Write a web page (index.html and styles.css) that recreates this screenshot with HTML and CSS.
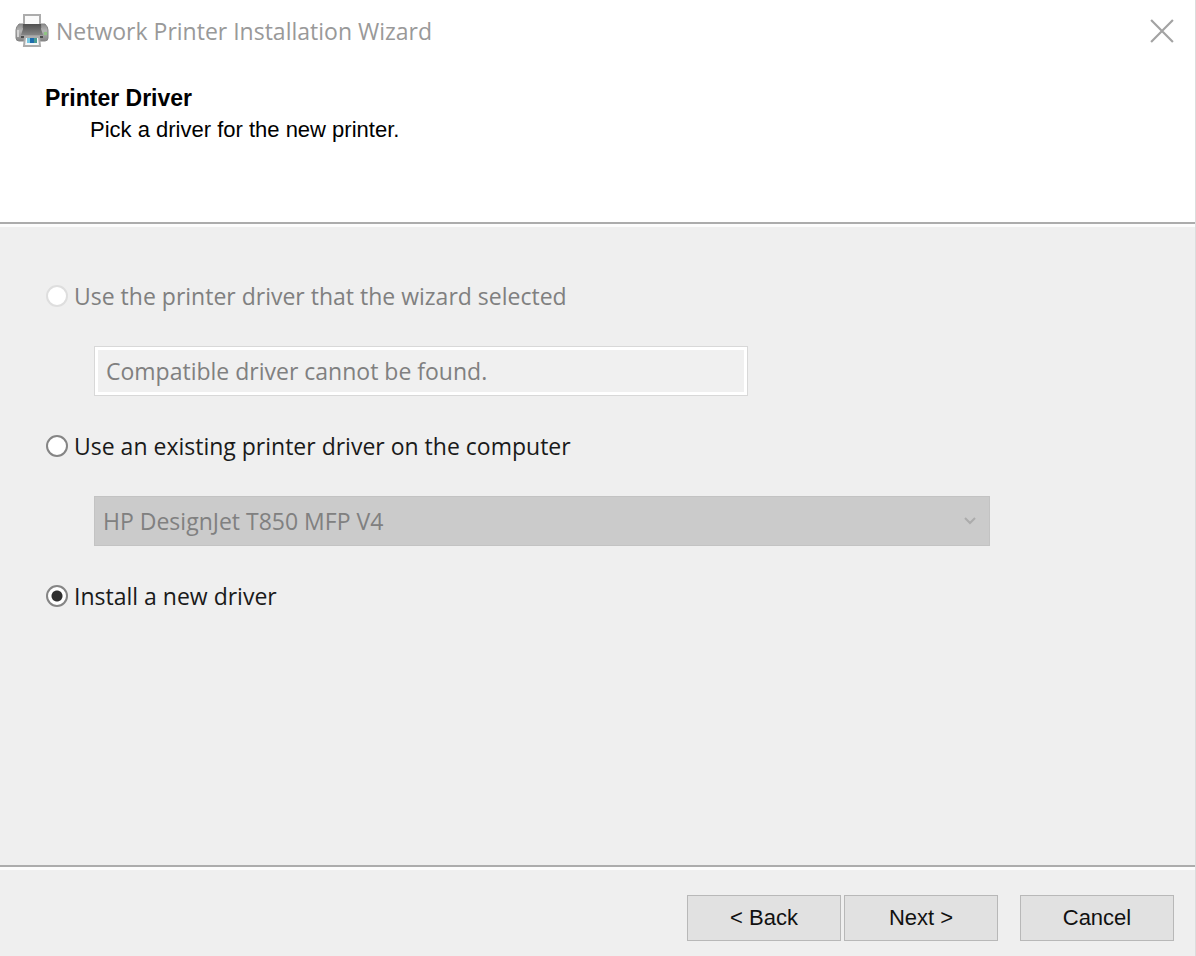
FILE: index.html
```html
<!DOCTYPE html>
<html lang="en">
<head>
<meta charset="utf-8">
<title>Network Printer Installation Wizard</title>
<link rel="stylesheet" href="styles.css">
</head>
<body>
<form class="wizard">
  <header class="header">
    <div class="titlebar">
      <svg class="app-icon" viewBox="0 0 34 34" aria-hidden="true">
        <defs>
          <linearGradient id="shell" x1="0" y1="0" x2="0" y2="1">
            <stop offset="0" stop-color="#8b8b8b"/>
            <stop offset=".4" stop-color="#b5b5b5"/>
            <stop offset="1" stop-color="#858585"/>
          </linearGradient>
          <linearGradient id="lid" x1="0" y1="0" x2="0" y2="1">
            <stop offset="0" stop-color="#505050"/>
            <stop offset="1" stop-color="#858585"/>
          </linearGradient>
        </defs>
        <path d="M9 14V1h16v13" fill="#fafafa" stroke="#acacac" stroke-width="2"/>
        <path d="M4 10h4v4h18v-4h4q3 3 3 6v8q0 3-3 3H4q-3 0-3-3v-8q0-3 3-6z" fill="url(#shell)" stroke="#858585"/>
        <path d="M8 10h18v5l2 6H6l2-6z" fill="url(#lid)"/>
        <path d="M6 22h22v2H6z" fill="#4c4c4c"/>
        <path d="M2 16h2v7H2z" fill="#d5d5d5"/>
        <path d="M29 18h3v3h-3z" fill="#8fc582"/>
        <path d="M10 23h14l1 9H9z" fill="#f4f7f8" stroke="#acacac" stroke-width="2"/>
        <path d="M12 24h4v5h-4z" fill="#76c8e3"/>
        <path d="M15 24h4v5h-4z" fill="#1d6cae"/>
        <path d="M19 24h3v5h-3z" fill="#489a92"/>
      </svg>
      <h1 class="title">Network Printer Installation Wizard</h1>
      <button class="close" type="button" aria-label="Close">
        <svg class="close-icon" viewBox="0 0 22 22" aria-hidden="true"><path d="M1 1l20 20M21 1L1 21"/></svg>
      </button>
    </div>
    <div class="heading">
      <h2 class="step">Printer Driver</h2>
      <p class="hint">Pick a driver for the new printer.</p>
    </div>
  </header>
  <main class="content">
    <label class="option option-disabled"><input class="radio" type="radio" name="driver" disabled><span>Use the printer driver that the wizard selected</span></label>
    <input class="selected-driver" type="text" value="Compatible driver cannot be found." aria-label="Selected driver" disabled>
    <label class="option"><input class="radio" type="radio" name="driver"><span>Use an existing printer driver on the computer</span></label>
    <div class="driver-picker">
      <select class="driver-list" aria-label="Existing driver" disabled><option>HP DesignJet T850 MFP V4</option></select>
      <svg class="chevron" viewBox="0 0 12 8" aria-hidden="true"><path d="M1 1l5 5 5-5"/></svg>
    </div>
    <label class="option"><input class="radio" type="radio" name="driver" checked><span>Install a new driver</span></label>
  </main>
  <footer class="footer">
    <div class="steps">
      <button class="button" type="button">&lt; Back</button>
      <button class="button" type="button">Next &gt;</button>
    </div>
    <button class="button" type="button">Cancel</button>
  </footer>
</form>
</body>
</html>
```
FILE: styles.css
```css
* {
  box-sizing: border-box;
}

body {
  margin: 0;
  background: #efefef;
  color: #1a1a1a;
  font-family: "Open Sans", "Noto Sans", sans-serif;
  font-size: 23px;
  line-height: 32px;
}

.wizard {
  display: flex;
  flex-direction: column;
  min-height: 100vh;
  border-right: 1px solid #dcdcdc;
}

.header {
  padding: 12px 21px 76px 15px;
  background: #fff;
}

.titlebar {
  display: flex;
  align-items: center;
  gap: 7px;
  height: 38px;
}

.app-icon {
  width: 34px;
  height: 34px;
}

.title {
  flex: 1;
  margin: 0;
  color: #999;
  font-size: 23px;
  font-weight: 400;
}

.close {
  display: flex;
  padding: 0;
  border: 0;
  background: none;
}

.close-icon {
  width: 24px;
  height: 24px;
  fill: none;
  stroke: #a3a3a3;
  stroke-width: 2;
}

.heading {
  padding: 32px 0 0 30px;
  color: #000;
  font-family: "Liberation Sans", Arial, sans-serif;
}

.step,
.hint {
  margin: 0;
}

.step {
  font-size: 23px;
}

.hint {
  padding-left: 45px;
  font-size: 22px;
}

.content,
.footer {
  border-top: 2px solid #acacac;
  box-shadow: inset 0 3px #fcfcfc;
}

.content {
  display: flex;
  flex: 1;
  flex-direction: column;
  align-items: flex-start;
  gap: 34px;
  padding: 56px 46px 32px;
}

.option {
  display: flex;
  align-items: center;
  gap: 6px;
}

.option-disabled {
  color: #808080;
}

.radio {
  width: 22px;
  height: 22px;
  margin: 0;
  appearance: none;
  border: 2px solid #858585;
  border-radius: 50%;
  background: #fff;
}

.radio:checked {
  background: radial-gradient(circle, #303030 5px, #fff 6px);
}

.radio:disabled {
  border-color: #dedede;
}

.selected-driver,
.driver-list {
  height: 50px;
  font: inherit;
  color: #808080;
}

.selected-driver {
  width: calc(60% - 8px);
  margin-left: 48px;
  padding: 0 11px;
  border: 1px solid #d8d8d8;
  background: #f0f0f0;
  box-shadow: inset 0 0 0 3px #fff;
}

.driver-picker {
  display: grid;
  align-items: center;
  width: calc(82% - 8px);
  margin-left: 48px;
}

.driver-list {
  grid-area: 1 / 1;
  width: 100%;
  padding: 0 8px;
  appearance: none;
  border: 1px solid #c3c3c3;
  border-radius: 0;
  background: #cbcbcb;
  opacity: 1;
}

.chevron {
  grid-area: 1 / 1;
  justify-self: end;
  width: 12px;
  height: 8px;
  margin-right: 14px;
  fill: none;
  stroke: #acacac;
  stroke-width: 2;
  pointer-events: none;
}

.footer {
  display: flex;
  justify-content: flex-end;
  gap: 22px;
  padding: 28px 21px 15px;
}

.steps {
  display: flex;
  gap: 3px;
}

.button {
  width: 154px;
  height: 46px;
  padding: 0;
  border: 1px solid #b8b8b8;
  background: #e1e1e1;
  color: #111;
  font-family: "Liberation Sans", Arial, sans-serif;
  font-size: 22px;
}
```
